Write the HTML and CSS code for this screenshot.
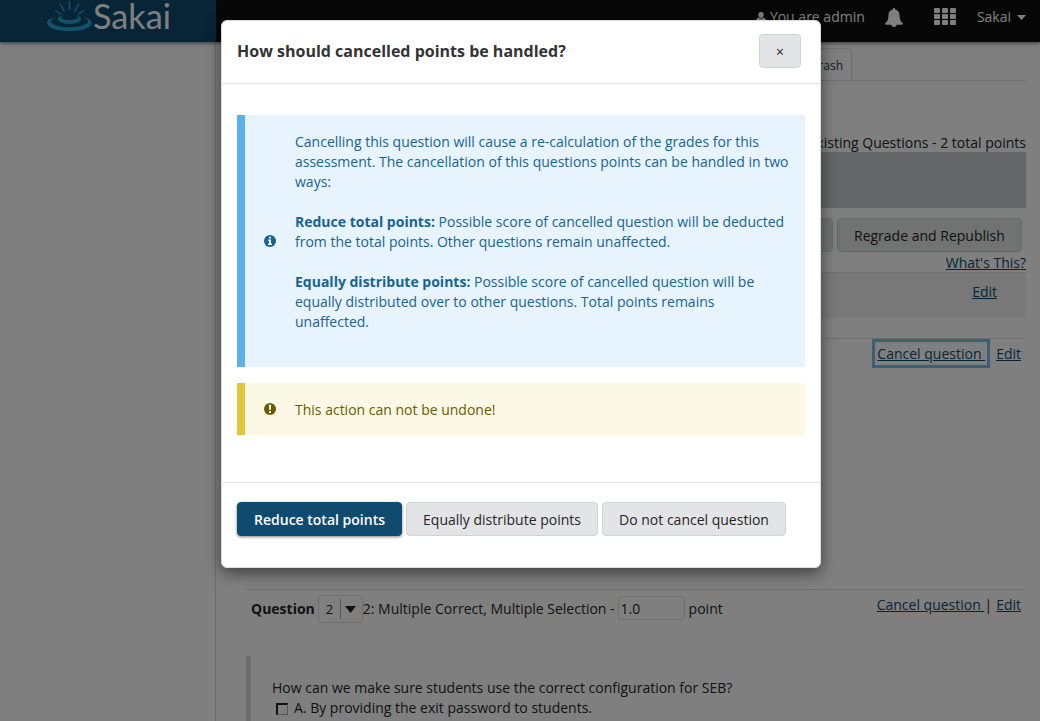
FILE: index.html
```html
<!DOCTYPE html>
<html lang="en">
<head>
<meta charset="utf-8">
<title>Sakai</title>
<link rel="stylesheet" href="styles.css">
</head>
<body>
<header class="topbar">
  <div class="brand">
    <svg class="logo" width="170" height="42" viewBox="0 0 170 42">
      <g stroke="#25a7d9" fill="none" stroke-width="1.5"><path d="M23.500 10V1M18.500 11.500L14 3.500M28.500 11.500L33 3.500M15 14.500L9 10.500M32 14.500L38 10.500"/></g>
      <g fill="#25a7d9">
        <path d="M11 17.500C4 19 3 22 7 24c7 4.500 26 4.500 33 0 4-2 3-5-4-6.500 7 .5 10 3 9.500 6C44.500 28.500 35 31 23.500 31S2 28.500 1 23.500c-.5-3 3-5.500 10-6z"/>
        <path d="M17 15.500c-2 1-2.500 2.200-1 3.200 3 1.700 12 1.700 15 0 1.500-1 1-2.200-1-3.200 3 .5 5 1.800 5 3.500 0 3-5 4.800-11.500 4.800S12 22 12 19c0-1.700 2-3 5-3.500z"/>
      </g>
      <text class="logo-text" x="47" y="29" textLength="78" lengthAdjust="spacingAndGlyphs">Sakai</text>
    </svg>
  </div>
  <nav class="tools">
    <svg width="10" height="11" viewBox="0 0 10 11"><path fill="currentColor" d="M5 0a2.700 2.700 0 0 1 2.700 2.900c0 1.600-1.200 3-2.700 3S2.300 4.500 2.300 2.900A2.700 2.700 0 0 1 5 0zM2.500 5.500c1.500 1.500 3.500 1.500 5 0C9.300 5.900 10 7.500 10 9.300c0 1-.6 1.700-1.600 1.700H1.600C.6 11 0 10.300 0 9.300 0 7.500.7 5.900 2.500 5.500z"/></svg>
    <span class="role">You are admin</span>
    <svg class="bell" width="18" height="19" viewBox="0 0 18 19"><path fill="currentColor" d="M9 0c.8 0 1.200.6 1.100 1.400C13 2 14.500 4 14.500 7c0 4 1 6.500 3.500 8.500 0 .7-.5 1.200-1.200 1.200h-5.200C11.500 18 10.400 19 9 19s-2.500-1-2.600-2.300H1.200C.5 16.700 0 16.200 0 15.500 2.500 13.500 3.500 11 3.500 7c0-3 1.500-5 4.400-5.600C7.800.6 8.200 0 9 0z"/></svg>
    <svg class="grid" width="22" height="17" viewBox="0 0 22 17"><g fill="currentColor"><rect width="6" height="5" rx="1"/><rect x="8" width="6" height="5" rx="1"/><rect x="16" width="6" height="5" rx="1"/><rect y="6" width="6" height="5" rx="1"/><rect x="8" y="6" width="6" height="5" rx="1"/><rect x="16" y="6" width="6" height="5" rx="1"/><rect y="12" width="6" height="5" rx="1"/><rect x="8" y="12" width="6" height="5" rx="1"/><rect x="16" y="12" width="6" height="5" rx="1"/></g></svg>
    <span class="user">Sakai</span>
    <svg class="caret" width="9" height="5" viewBox="0 0 9 5"><path fill="currentColor" d="M0 0h9L4.500 5z"/></svg>
  </nav>
</header>
<div class="layout">
  <aside class="side"></aside>
  <main class="main">
    <div class="tabs"><span class="tab">Trash</span></div>
    <div class="total">Existing Questions - 2 total points</div>
    <div class="band"></div>
    <div class="actions"><span class="btn">Republish</span><span class="btn regrade">Regrade and Republish</span></div>
    <div class="hint"><a class="link">What's This?</a></div>
    <div class="part"><a class="link">Edit</a></div>
    <section class="question first">
      <div class="links"><a class="link focus">Cancel question&nbsp;</a><a class="link edit">Edit</a></div>
    </section>
    <section class="question second">
      <div class="row">
        <b>Question</b>
        <span class="select"><span class="num">2</span><svg width="11" height="7" viewBox="0 0 11 7"><path d="M0 0h11L5.500 7z" fill="#222"/></svg></span>
        <span>2: Multiple Correct, Multiple Selection -</span>
        <span class="input">1.0</span>
        <span>point</span>
      </div>
      <div class="links"><a class="link">Cancel question&nbsp;</a><span class="pipe">|</span><a class="link">Edit</a></div>
    </section>
    <div class="quote">
      <div>How can we make sure students use the correct configuration for SEB?</div>
      <div class="answer"><span class="check"></span>A. By providing the exit password to students.</div>
    </div>
  </main>
</div>
<div class="backdrop">
  <div class="modal">
    <div class="modal-head"><h1>How should cancelled points be handled?</h1><button class="button close">×</button></div>
    <div class="modal-body">
      <div class="alert info">
        <svg width="12" height="12" viewBox="0 0 12 12"><circle cx="6" cy="6" r="6" fill="#196390"/><path fill="#e7f4fd" d="M5 1.700h2v1.800H5zM4 4.500h3V8.600h1V10H4V8.600h1V5.900H4z"/></svg>
        <div class="copy">
          <p>Cancelling this question will cause a re-calculation of the grades for this assessment. The cancellation of this questions points can be handled in two ways:</p>
          <p><b>Reduce total points:</b> Possible score of cancelled question will be deducted from the total points. Other questions remain unaffected.</p>
          <p><b>Equally distribute points:</b> Possible score of cancelled question will be equally distributed over to other questions. Total points remains unaffected.</p>
        </div>
      </div>
      <div class="alert warn">
        <svg width="12" height="12" viewBox="0 0 12 12"><circle cx="6" cy="6" r="6" fill="#6a5b00"/><path fill="#fbf8e5" d="M4.900 1.800h2.200L6.800 7H5.200zM5 8h2v1.900H5z"/></svg>
        <div class="copy">This action can not be undone!</div>
      </div>
    </div>
    <div class="modal-foot"><button class="button primary">Reduce total points</button><button class="button mid">Equally distribute points</button><button class="button last">Do not cancel question</button></div>
  </div>
</div>
</body>
</html>
```
FILE: styles.css
```css
* { box-sizing: border-box; }
body { margin: 0; height: 721px; overflow: hidden; background: #fff; color: #262626; font: 14px/20px "Open Sans", "Noto Sans", sans-serif; }
.topbar { position: relative; display: flex; height: 42px; background: #0f0f0f; box-shadow: 0 1px 4px rgba(0,0,0,.6); }
.brand { width: 216px; padding-left: 46px; background: #0f4b6f; }
.logo { display: block; }
.logo-text { font: 34px Lato, sans-serif; fill: #fff; }
.tools { flex: 1; display: flex; align-items: center; justify-content: flex-end; height: 34px; padding-right: 14px; color: #fff; }
.tools svg { flex: none; }
.role { width: 95px; margin-left: 4px; white-space: nowrap; }
.bell { margin-left: 20px; }
.grid { margin: 0 21px 2px 31px; }
.caret { margin-left: 6px; }
.layout { display: flex; height: 679px; }
.side { width: 216px; border-right: 1px solid #ddd; }
.main { flex: 1; padding: 6px 14px 0 30px; }
.tabs { display: flex; height: 33px; padding-left: 551px; border-bottom: 1px solid #ddd; }
.tab { width: 55px; padding: 7px 8px 0; border: 1px solid #ddd; border-bottom: 0; border-radius: 0 4px 0 0; font-size: 12px; text-align: right; color: #2b3a4a; }
.total { margin-top: 52px; text-align: right; }
.band { height: 56px; margin-top: -1px; background: #c9cacc; }
.actions { display: flex; justify-content: flex-end; gap: 4px; padding: 10px 4px 0 0; }
.btn { height: 34px; padding: 7px 16px 5px; border: 1px solid #cfd1d1; border-radius: 4px; background: #e3e5e5; }
.regrade { width: 185px; }
.link { color: #0f4b6f; text-decoration: underline; }
.hint { height: 20px; margin-top: 1px; text-align: right; }
.part { height: 46px; margin-top: -1px; padding: 9px 29px 0 0; border-top: 1px solid #ddd; background: #f0f0f0; text-align: right; }
.question { display: flex; justify-content: flex-end; border-top: 1px solid #ddd; }
.links { display: flex; padding-right: 5px; white-space: nowrap; }
.first { height: 251px; margin-top: 20px; }
.focus { height: 29px; margin-right: 6px; padding: 2px; border: 3px solid #7bbfea; }
.edit { padding-top: 5px; }
.second { height: 67px; justify-content: space-between; padding-top: 5px; }
.row { display: flex; align-items: center; height: 28px; padding-left: 5px; white-space: nowrap; }
.select { display: flex; align-items: center; width: 45px; height: 28px; margin: 0 0 0 3px; padding-left: 7px; border: 1px solid #ddd; border-radius: 4px; }
.num { width: 15px; margin-right: 4px; border-right: 1px solid #aaa; font-size: 13px; }
.input { width: 67px; height: 24px; margin: 0 4px 2px 3px; padding: 2px 2px 0; border: 1px solid #ddd; border-radius: 4px; }
.second .links { height: 20px; }
.pipe { margin: 0 4px 0 0; }
.quote { height: 66px; padding: 22px 0 0 21px; border-left: 5px solid #d8dcda; }
.answer { display: flex; align-items: center; padding-left: 4px; }
.check { width: 12px; height: 12px; margin: 2px 6px 0 0; border: 1px solid #aaa; border-top: 2px solid #222; border-left: 2px solid #222; }
.backdrop { position: absolute; inset: 0; padding: 20px 0 0 221px; background: rgba(0,0,0,.5); }
.modal { display: flex; flex-direction: column; width: 600px; height: 548px; border: 1px solid #ddd; border-radius: 6px; background: #fff; box-shadow: 0 5px 15px rgba(0,0,0,.5); }
.modal-head { display: flex; justify-content: space-between; height: 63px; padding: 13px 19px 0 15px; border-bottom: 1px solid #e3e3e3; }
h1 { margin: 0; font-size: 16px; line-height: 34px; color: #333; }
.button { height: 34px; padding: 2px 0 0; border: 1px solid #d1d3d4; border-radius: 4px; background: #e3e4e6; color: #262626; font: inherit; }
.close { width: 42px; }
.modal-body { display: flex; flex-direction: column; gap: 16px; height: 398px; padding: 31px 15px 0; }
.alert { display: flex; align-items: center; border-left: 8px solid; padding-left: 19px; }
.info { height: 252px; border-color: #5bb1eb; background: #e7f4fd; color: #196390; }
.warn { height: 52px; border-color: #e2c63a; background: #fbf8e5; color: #6a5b00; }
.alert svg { flex: none; }
.copy { width: 496px; margin-left: 19px; padding-top: 1px; }
.copy p { margin: 0 0 20px; }
.info .copy { align-self: flex-start; padding-top: 17px; }
.modal-foot { display: flex; gap: 4px; padding: 19px 15px 0; border-top: 1px solid #e3e3e3; }
.primary { width: 165px; border-color: #0f4b6f; background: #0f4b6f; color: #fff; font-weight: 600; box-shadow: 0 1px 3px rgba(0,0,0,.5); }
.mid { width: 192px; }
.last { width: 184px; }
```
